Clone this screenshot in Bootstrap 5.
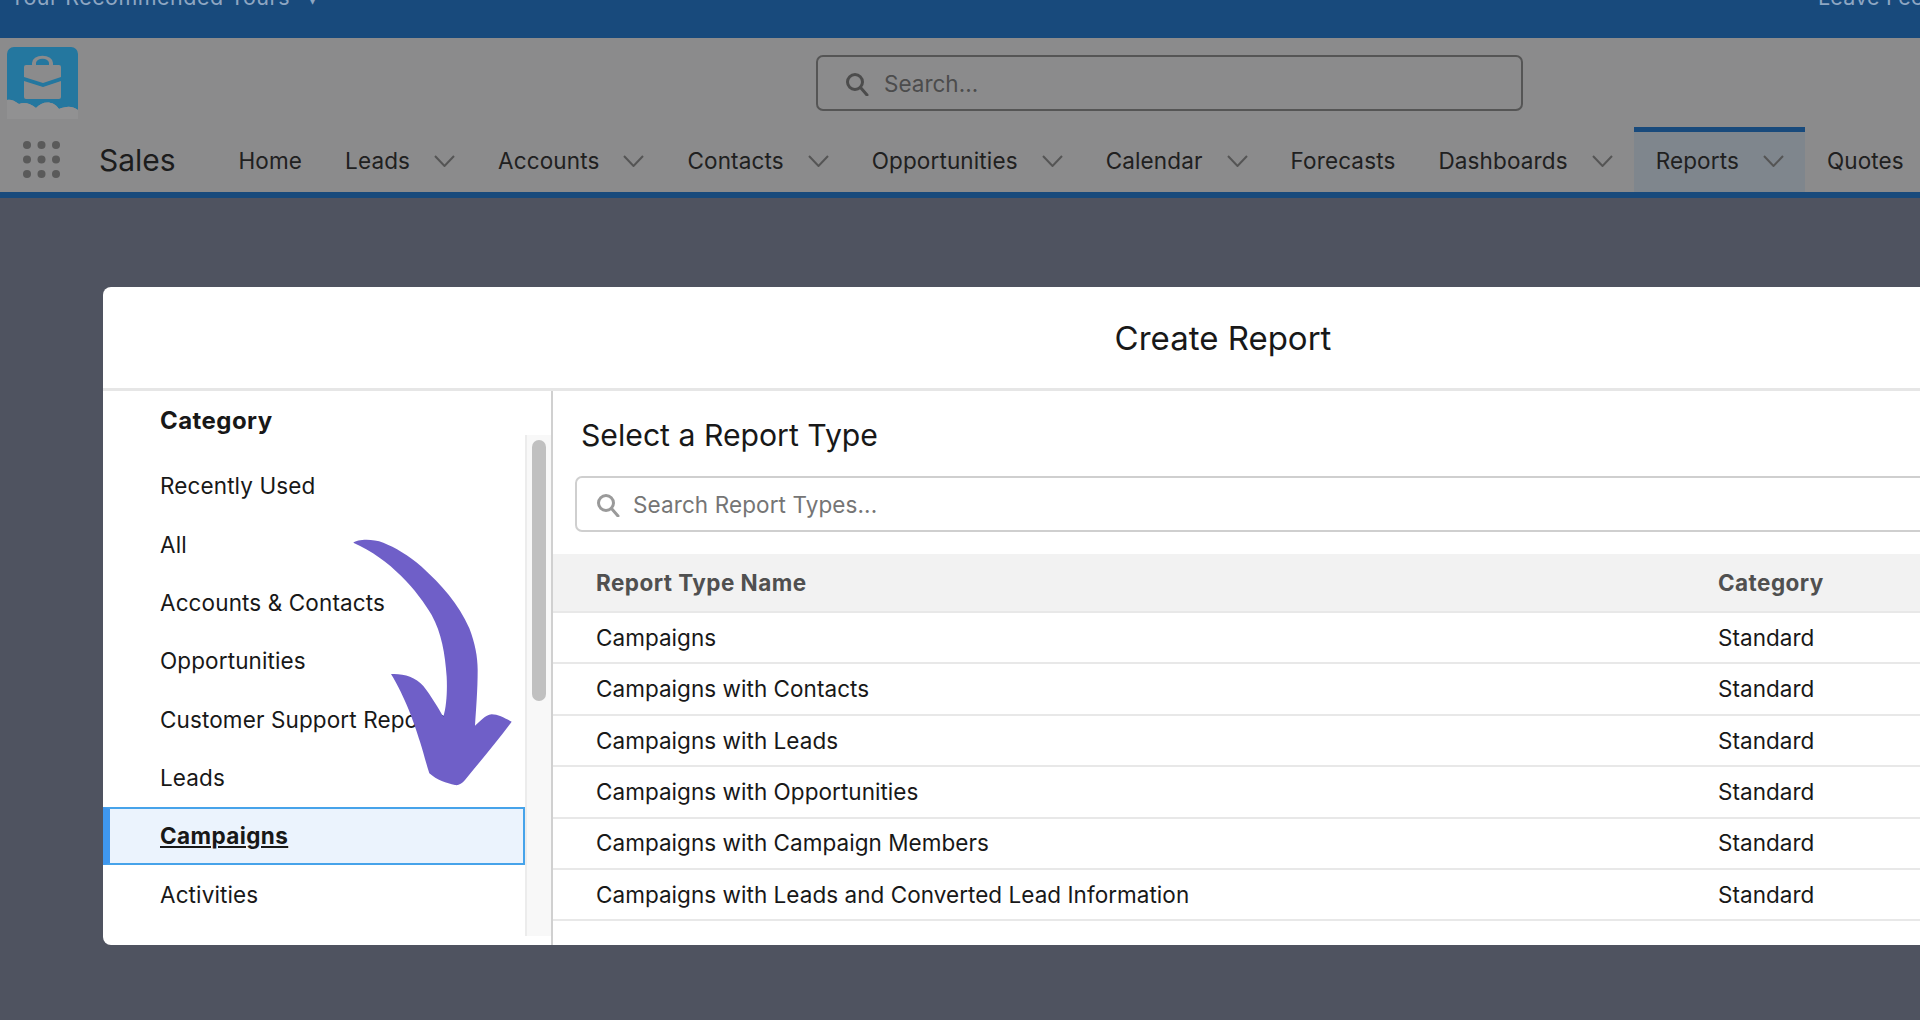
<!DOCTYPE html>
<html lang="en">
<head>
<meta charset="utf-8">
<title>Create Report</title>
<link href="https://cdn.jsdelivr.net/npm/bootstrap@5.3.0/dist/css/bootstrap.min.css" rel="stylesheet">
<style>
html,body{height:1020px;overflow:hidden}
body{background:#4f5360;font-family:Inter,"Liberation Sans",sans-serif;color:#181818;position:relative;width:1920px}
.tour-bar{height:38px;background:#184a7c;color:#8ea6c2;font-size:21.5px;line-height:26px;overflow:hidden}
.tour-bar .tour-left{margin-top:-16px;padding-left:10px;letter-spacing:.5px}
.tour-bar .tour-right{margin-top:-16px;width:102px;overflow:hidden;white-space:nowrap;letter-spacing:.2px}
.app-head{height:154px;background:#8b8b8c;border-bottom:0}
.head-top{height:89px;padding-left:7px}
.logo-box{width:71px;height:72px;margin-top:9px;flex:none}
.top-search{margin-left:738px;margin-top:17px;width:707px;height:56px;border:2px solid #555;border-radius:7px;padding:2px 0 0 27px;color:#4c4c4c;font-size:22.5px;gap:15px}
.head-nav{height:65px}
.apps-icon{width:37px;height:37px;margin-left:23px;flex:none}
.app-name{font-size:30px;margin-left:39px;margin-right:41px;width:77px;flex:none;color:#1c1c1c;white-space:nowrap;padding-top:2px}
.nav-entry{height:65px;flex:none;padding:1px 21.5px 4px;font-size:22.5px;letter-spacing:.13px;color:#202020;white-space:nowrap;display:flex;align-items:center;gap:24px;border-top:5px solid transparent}
.nav-entry.is-on{background:#7f868d;border-top-color:#184a7c}
.chev{width:21px;height:12px;flex:none}
.head-rule{height:6px;background:#184a7c}
.report-modal{margin:89px 0 0 103px;width:2240px;height:658px;background:#fff;border-radius:8px;overflow:hidden}
.modal-head{height:104px;border-bottom:3px solid #e6e6e6;font-size:33px;color:#181818;padding-top:2px}
.modal-main{height:554px}
.cat-pane{width:450px;flex:none;border-right:2px solid #d0d0d0}
.cat-title{height:44px;padding:16px 0 0 57px;font-size:24px;font-weight:700;letter-spacing:.45px;line-height:28px}
.cat-body{height:501px}
.cat-list{width:422px;flex:none;font-size:22.5px;letter-spacing:.12px;padding-top:22px}
.cat-row{height:58.4px;padding-left:57px;display:flex;align-items:center;white-space:nowrap;overflow:visible}
.cat-row.is-sel{background:#ebf3fd;border:2px solid #46a3ea;border-left:7px solid #3f97ee;padding-left:50px;font-weight:700;letter-spacing:.4px;text-decoration:underline;height:58px}
.cat-track{flex:1;background:#f8f8f8;border-left:2px solid #ececec;padding:5px 5px 0 5px}
.cat-thumb{height:261px;background:#c0c0c0;border-radius:7px}
.type-pane{flex:1}
.type-title{height:85px;padding:25px 0 0 28px;font-size:30.2px;line-height:38px;font-weight:400}
.type-search{margin-left:22px;height:56px;border:2px solid #cfcfcf;border-radius:7px;padding:2px 0 0 19px;gap:13px;color:#757575;font-size:22.5px;letter-spacing:.1px}
.type-table{margin:22px 0 0;table-layout:fixed;width:1600px;font-size:22.5px;letter-spacing:.04px}
.type-table th,.type-table td{padding:0 0 0 43px;vertical-align:middle;border-bottom:2px solid #e8e8e8;color:#181818;background:transparent;box-shadow:none}
.type-table th{height:58px;background:#f2f2f2;color:#505050;font-weight:700;letter-spacing:.45px}
.type-table td{height:51.4px}
.first-col{width:1122px}
.arrow-mark{position:absolute;left:340px;top:520px;width:200px;height:280px}
</style>
</head>
<body>
<div class="tour-bar d-flex justify-content-between">
  <div class="tour-left">Your Recommended Tours &nbsp;<span class="ms-1">▾</span></div>
  <div class="tour-right">Leave Feedback</div>
</div>
<header class="app-head">
  <div class="head-top d-flex align-items-start">
    <svg class="logo-box" viewBox="0 0 71 72" aria-hidden="true">
      <path d="M7 0H64a7 7 0 0 1 7 7V63C64 58 58 60 52 62 46 53 35 54 29 61 23 56 17 55 12 57 7 53 3 52 0 53V7a7 7 0 0 1 7-7z" fill="#24779f"/>
      <path d="M0 53C3 52 7 53 12 57 17 55 23 56 29 61 35 54 46 53 52 62 58 60 64 58 71 63V72H0z" fill="#919192"/>
      <path d="M25 19v-3a10 7 0 0 1 21 0v3h-4v-3a6 4 0 0 0-13 0v3z" fill="#8b8b8c"/>
      <path d="M17 20a2 2 0 0 1 2-2H52a2 2 0 0 1 2 2V30L36 36 17 30z" fill="#8b8b8c"/>
      <path d="M17 34L36 40 54 34V50a2 2 0 0 1-2 2H19a2 2 0 0 1-2-2z" fill="#8b8b8c"/>
    </svg>
    <div class="top-search d-flex align-items-center">
      <svg width="24" height="24" viewBox="0 0 24 24" fill="none" stroke="#4c4c4c" stroke-width="3" aria-hidden="true"><circle cx="10" cy="10" r="7.5"/><path d="M15.5 15.5L22 23" stroke-linecap="round"/></svg>
      <span>Search...</span>
    </div>
  </div>
  <nav class="head-nav d-flex align-items-center">
    <svg class="apps-icon" viewBox="0 0 37 37" fill="#5a5a5a" aria-hidden="true">
      <circle cx="4" cy="4" r="4"/><circle cx="18.5" cy="4" r="4"/><circle cx="33" cy="4" r="4"/>
      <circle cx="4" cy="18.5" r="4"/><circle cx="18.5" cy="18.5" r="4"/><circle cx="33" cy="18.5" r="4"/>
      <circle cx="4" cy="33" r="4"/><circle cx="18.5" cy="33" r="4"/><circle cx="33" cy="33" r="4"/>
    </svg>
    <div class="app-name">Sales</div>
    <div class="nav-entry">Home</div>
    <div class="nav-entry">Leads <svg class="chev" viewBox="0 0 21 12" fill="none" stroke="#555" stroke-width="2"><path d="M1 1l9.5 10L20 1"/></svg></div>
    <div class="nav-entry">Accounts <svg class="chev" viewBox="0 0 21 12" fill="none" stroke="#555" stroke-width="2"><path d="M1 1l9.5 10L20 1"/></svg></div>
    <div class="nav-entry">Contacts <svg class="chev" viewBox="0 0 21 12" fill="none" stroke="#555" stroke-width="2"><path d="M1 1l9.5 10L20 1"/></svg></div>
    <div class="nav-entry">Opportunities <svg class="chev" viewBox="0 0 21 12" fill="none" stroke="#555" stroke-width="2"><path d="M1 1l9.5 10L20 1"/></svg></div>
    <div class="nav-entry">Calendar <svg class="chev" viewBox="0 0 21 12" fill="none" stroke="#555" stroke-width="2"><path d="M1 1l9.5 10L20 1"/></svg></div>
    <div class="nav-entry">Forecasts</div>
    <div class="nav-entry">Dashboards <svg class="chev" viewBox="0 0 21 12" fill="none" stroke="#555" stroke-width="2"><path d="M1 1l9.5 10L20 1"/></svg></div>
    <div class="nav-entry is-on">Reports <svg class="chev" viewBox="0 0 21 12" fill="none" stroke="#555" stroke-width="2"><path d="M1 1l9.5 10L20 1"/></svg></div>
    <div class="nav-entry">Quotes</div>
  </nav>
</header>
<div class="head-rule"></div>
<main class="report-modal">
  <div class="modal-head d-flex align-items-center justify-content-center">Create Report</div>
  <div class="modal-main d-flex">
    <aside class="cat-pane">
      <div class="cat-title">Category</div>
      <div class="cat-body d-flex">
        <div class="cat-list">
          <div class="cat-row">Recently Used</div>
          <div class="cat-row">All</div>
          <div class="cat-row">Accounts &amp; Contacts</div>
          <div class="cat-row">Opportunities</div>
          <div class="cat-row">Customer Support Reports</div>
          <div class="cat-row">Leads</div>
          <div class="cat-row is-sel">Campaigns</div>
          <div class="cat-row">Activities</div>
        </div>
        <div class="cat-track"><div class="cat-thumb"></div></div>
      </div>
    </aside>
    <section class="type-pane">
      <h2 class="type-title mb-0">Select a Report Type</h2>
      <div class="type-search d-flex align-items-center">
        <svg width="24" height="24" viewBox="0 0 24 24" fill="none" stroke="#9a9a9a" stroke-width="3" aria-hidden="true"><circle cx="10" cy="10" r="7.5"/><path d="M15.5 15.5L22 23" stroke-linecap="round"/></svg>
        <span>Search Report Types...</span>
      </div>
      <table class="table type-table">
        <thead><tr><th class="first-col">Report Type Name</th><th>Category</th></tr></thead>
        <tbody>
          <tr><td>Campaigns</td><td>Standard</td></tr>
          <tr><td>Campaigns with Contacts</td><td>Standard</td></tr>
          <tr><td>Campaigns with Leads</td><td>Standard</td></tr>
          <tr><td>Campaigns with Opportunities</td><td>Standard</td></tr>
          <tr><td>Campaigns with Campaign Members</td><td>Standard</td></tr>
          <tr><td>Campaigns with Leads and Converted Lead Information</td><td>Standard</td></tr>
        </tbody>
      </table>
    </section>
  </div>
</main>
<svg class="arrow-mark" viewBox="0 0 600 840" aria-hidden="true">
  <path fill="#6f5fc8" d="M40 68C52 58 95 55 130 68C165 82 205 105 245 140C305 195 355 250 388 325C405 370 413 410 413 450C413 510 408 570 405 617C420 605 435 585 455 583C475 583 495 595 515 605C470 665 420 725 375 780C365 792 355 797 345 795C320 790 290 780 268 760C258 730 250 695 240 665C225 615 195 530 153 462C190 460 225 470 250 498C275 530 295 565 310 590C320 560 322 510 320 470C315 400 305 340 275 285C235 215 150 115 40 68Z"/>
</svg>
<script src="https://cdn.jsdelivr.net/npm/bootstrap@5.3.0/dist/js/bootstrap.bundle.min.js"></script>
</body>
</html>
